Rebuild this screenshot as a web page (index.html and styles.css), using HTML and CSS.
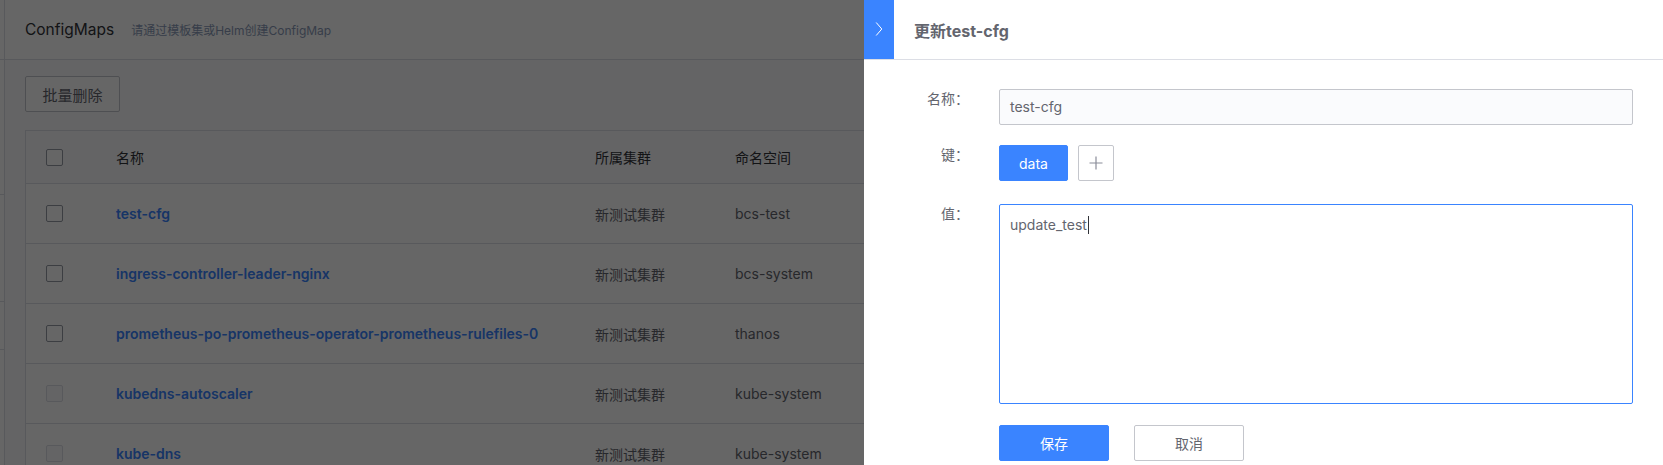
FILE: index.html
```html
<!DOCTYPE html>
<html lang="zh-CN">
<head>
<meta charset="utf-8">
<title>ConfigMaps</title>
<link rel="stylesheet" href="styles.css">
</head>
<body>
<div class="page">
  <aside class="side-strip">
    <div class="strip-item h60"></div>
    <div class="strip-item h135"></div>
    <div class="strip-item h107"></div>
    <div class="strip-item h48"></div>
  </aside>
  <main class="main">
    <header class="page-header">
      <span class="page-title">ConfigMaps</span>
      <span class="page-desc">请通过模板集或Helm创建ConfigMap</span>
    </header>
    <section class="content">
      <div class="toolbar">
        <button class="btn-default batch-btn">批量删除</button>
      </div>
      <div class="table">
        <div class="tr thead">
          <div class="td col-check"><span class="checkbox"></span></div>
          <div class="td col-name">名称</div>
          <div class="td col-cluster">所属集群</div>
          <div class="td col-ns">命名空间</div>
          <div class="td col-rest"></div>
        </div>
        <div class="tr">
          <div class="td col-check"><span class="checkbox"></span></div>
          <div class="td col-name link">test-cfg</div>
          <div class="td col-cluster">新测试集群</div>
          <div class="td col-ns">bcs-test</div>
          <div class="td col-rest"></div>
        </div>
        <div class="tr">
          <div class="td col-check"><span class="checkbox"></span></div>
          <div class="td col-name link">ingress-controller-leader-nginx</div>
          <div class="td col-cluster">新测试集群</div>
          <div class="td col-ns">bcs-system</div>
          <div class="td col-rest"></div>
        </div>
        <div class="tr">
          <div class="td col-check"><span class="checkbox"></span></div>
          <div class="td col-name link">prometheus-po-prometheus-operator-prometheus-rulefiles-0</div>
          <div class="td col-cluster">新测试集群</div>
          <div class="td col-ns">thanos</div>
          <div class="td col-rest"></div>
        </div>
        <div class="tr">
          <div class="td col-check"><span class="checkbox disabled"></span></div>
          <div class="td col-name link">kubedns-autoscaler</div>
          <div class="td col-cluster">新测试集群</div>
          <div class="td col-ns">kube-system</div>
          <div class="td col-rest"></div>
        </div>
        <div class="tr">
          <div class="td col-check"><span class="checkbox disabled"></span></div>
          <div class="td col-name link">kube-dns</div>
          <div class="td col-cluster">新测试集群</div>
          <div class="td col-ns">kube-system</div>
          <div class="td col-rest"></div>
        </div>
      </div>
    </section>
  </main>
</div>

<div class="mask"></div>

<div class="slider">
  <div class="slider-header">
    <div class="slider-toggle">
      <svg width="8" height="16" viewBox="0 0 8 16"><path d="M1.2 1.5 L6.8 8 L1.2 14.5" fill="none" stroke="#fff" stroke-width="1"/></svg>
    </div>
    <div class="slider-title">更新test-cfg</div>
  </div>
  <div class="form">
    <div class="form-row">
      <div class="form-label">名称：</div>
      <div class="form-control">
        <div class="input disabled">test-cfg</div>
      </div>
    </div>
    <div class="form-row">
      <div class="form-label">键：</div>
      <div class="form-control keys">
        <button class="btn-primary key-btn">data</button>
        <button class="btn-plus">
          <svg width="16" height="16" viewBox="0 0 16 16"><path d="M8 1.5 V14.5 M1.5 8 H14.5" stroke="#8a8d99" stroke-width="1.2" fill="none"/></svg>
        </button>
      </div>
    </div>
    <div class="form-row row-value">
      <div class="form-label">值：</div>
      <div class="form-control">
        <div class="textarea">update_test<span class="caret"></span></div>
      </div>
    </div>
    <div class="form-row row-actions">
      <div class="form-label"></div>
      <div class="form-control actions">
        <button class="btn-primary action-btn">保存</button>
        <button class="btn-default action-btn">取消</button>
      </div>
    </div>
  </div>
</div>
</body>
</html>
```

FILE: styles.css
```css
* { box-sizing: border-box; }

html, body {
  margin: 0;
  padding: 0;
  height: 100%;
  overflow: hidden;
}

body {
  font-family: "Inter", "Noto Sans CJK SC", sans-serif;
  font-size: 14px;
  color: #63656e;
  background: #fafbfd;
}

button {
  font-family: inherit;
  font-size: 14px;
  cursor: pointer;
}

.page {
  display: flex;
  height: 465px;
}

.side-strip {
  width: 5px;
  flex: none;
  border-right: 1px solid #dcdee5;
  background: #fff;
}

.strip-item { border-bottom: 1px solid #dcdee5; }
.h60 { height: 60px; }
.h135 { height: 135px; }
.h107 { height: 107px; }
.h48 { height: 48px; }

.main {
  flex: 1;
  min-width: 0;
}

.page-header {
  height: 60px;
  background: #fff;
  border-bottom: 1px solid #dcdee5;
  display: flex;
  align-items: center;
  padding-left: 20px;
}

.page-title {
  font-size: 15.5px;
  color: #313238;
}

.page-desc {
  margin-left: 17px;
  font-size: 12px;
  color: #8a9ab7;
}

.content {
  padding: 16px 20px 0 20px;
}

.toolbar {
  height: 36px;
  margin-bottom: 18px;
}

.btn-default {
  height: 36px;
  width: 90px;
  border: 1px solid #c4c6cc;
  background: #fff;
  color: #63656e;
  border-radius: 2px;
  padding: 0;
}

.batch-btn {
  width: 95px;
  font-size: 15px;
}

.table {
  background: #fff;
  border: 1px solid #dcdee5;
  border-bottom: none;
}

.tr {
  display: grid;
  grid-template-columns: 90px 479px 140px 200px 1fr;
  height: 60px;
  border-bottom: 1px solid #dcdee5;
  align-items: center;
}

.thead {
  height: 53px;
  background: #fafbfd;
  color: #313238;
}

.td {
  white-space: nowrap;
}

.col-check {
  padding-left: 20px;
  display: flex;
  align-items: center;
}

.checkbox {
  width: 17px;
  height: 17px;
  border: 1px solid #979ba5;
  border-radius: 2px;
  background: #fff;
}

.checkbox.disabled {
  border-color: #dcdee5;
  background: #fafbfd;
}

.link {
  color: #3a84ff;
  font-weight: 600;
}

.mask {
  position: fixed;
  inset: 0;
  background: rgba(0, 0, 0, 0.6);
}

.slider {
  position: fixed;
  top: 0;
  right: 0;
  bottom: 0;
  width: 799px;
  background: #fff;
}

.slider-header {
  height: 60px;
  border-bottom: 1px solid #dcdee5;
  display: flex;
  align-items: center;
}

.slider-toggle {
  width: 30px;
  height: 60px;
  background: #3a84ff;
  display: flex;
  align-items: center;
  justify-content: center;
  margin-top: -1px;
}

.slider-title {
  margin-left: 20px;
  font-size: 16px;
  font-weight: bold;
  color: #63656e;
}

.form {
  padding: 29px 30px 0 0;
  display: flex;
  flex-direction: column;
  gap: 20px;
}

.form-row {
  display: flex;
}

.row-value { margin-top: 3px; }
.row-actions { margin-top: 1px; }

.form-label {
  width: 105px;
  flex: none;
  text-align: right;
  line-height: 20px;
  color: #63656e;
  margin-right: 30px;
}

.form-control {
  flex: 1;
}

.input {
  height: 36px;
  border: 1px solid #c4c6cc;
  border-radius: 2px;
  padding: 0 10px;
  line-height: 34px;
}

.input.disabled {
  background: #fafbfd;
  color: #63656e;
}

.keys {
  display: flex;
  gap: 10px;
}

.btn-primary {
  height: 36px;
  border: 1px solid #3a84ff;
  background: #3a84ff;
  color: #fff;
  border-radius: 2px;
  padding: 0;
}

.key-btn { width: 69px; }

.btn-plus {
  width: 36px;
  height: 36px;
  border: 1px solid #c4c6cc;
  background: #fff;
  border-radius: 2px;
  padding: 0;
  display: flex;
  align-items: center;
  justify-content: center;
}

.textarea {
  height: 200px;
  border: 1px solid #3a84ff;
  border-radius: 2px;
  padding: 10px 10px;
  line-height: 20px;
  color: #63656e;
}

.caret {
  display: inline-block;
  width: 1px;
  height: 18px;
  background: #313238;
  vertical-align: -4px;
  margin-left: 1px;
}

.actions {
  display: flex;
  gap: 25px;
}

.action-btn { width: 110px; }
```
